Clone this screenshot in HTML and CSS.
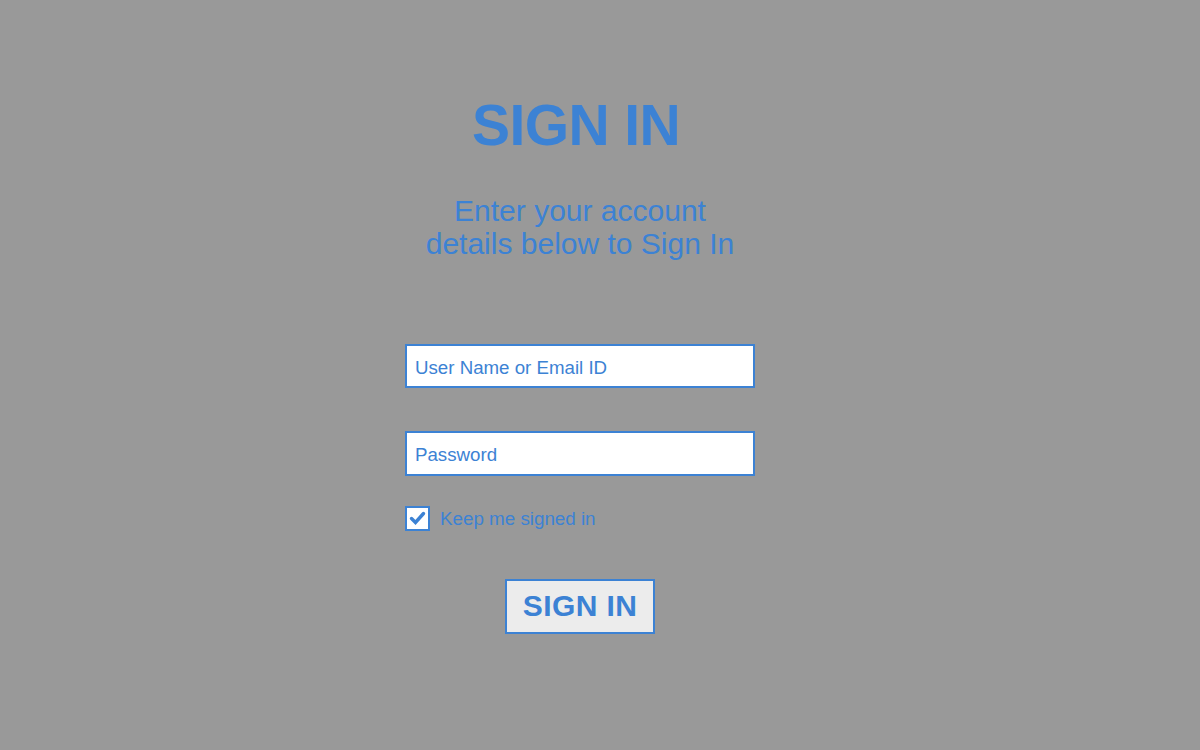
FILE: index.html
```html
<!DOCTYPE html>
<html lang="en">
<head>
<meta charset="utf-8">
<title>Sign In</title>
<link rel="stylesheet" href="styles.css">
</head>
<body>
<main class="page">
  <form class="signin">
    <h1 class="title">SIGN IN</h1>
    <p class="subtitle">Enter your account<br>details below to Sign In</p>
    <input class="field field-user" type="text" placeholder="User Name or Email ID">
    <input class="field field-pass" type="password" placeholder="Password">
    <label class="keep">
      <span class="check">
        <svg viewBox="0 0 21 21" width="21" height="21"><path d="M4.5 10.5 L8.5 14.5 L16.5 5.5" fill="none" stroke="#3c82d4" stroke-width="3.4" stroke-linecap="round" stroke-linejoin="miter"/></svg>
      </span>
      <span class="keep-text">Keep me signed in</span>
    </label>
    <button class="submit" type="button">SIGN IN</button>
  </form>
</main>
</body>
</html>
```
FILE: styles.css
```css
html, body {
  margin: 0;
  padding: 0;
  height: 100%;
}
body {
  background: #999999;
  font-family: "Liberation Sans", Arial, sans-serif;
  color: #3c82d4;
}
.page {
  display: flex;
  justify-content: center;
  padding-right: 40px;
  padding-top: 93px;
}
.signin {
  width: 350px;
  display: flex;
  flex-direction: column;
  align-items: center;
}
.title {
  margin: 0 0 0 -8px;
  font-size: 57px;
  font-weight: bold;
  line-height: 64px;
  letter-spacing: -0.6px;
}
.subtitle {
  margin: 37px 0 0 0;
  font-size: 30px;
  line-height: 33px;
  text-align: center;
}
.field {
  box-sizing: border-box;
  width: 350px;
  height: 44px;
  border: 2px solid #3c82d4;
  background: #ffffff;
  padding: 3px 8px 0 8px;
  font-family: "Liberation Sans", Arial, sans-serif;
  font-size: 18.7px;
  color: #3c82d4;
  outline: none;
}
.field::placeholder {
  color: #3c82d4;
  opacity: 1;
}
.field-user {
  margin-top: 84px;
}
.field-pass {
  margin-top: 43px;
  height: 45px;
  padding-top: 2px;
}
.keep {
  align-self: flex-start;
  display: flex;
  align-items: center;
  margin-top: 30px;
  gap: 10px;
}
.check {
  box-sizing: border-box;
  width: 25px;
  height: 25px;
  border: 2px solid #3c82d4;
  background: #ffffff;
  display: flex;
  align-items: center;
  justify-content: center;
}
.check svg {
  display: block;
}
.keep-text {
  font-size: 18.8px;
}
.submit {
  box-sizing: border-box;
  margin-top: 48px;
  width: 150px;
  height: 55px;
  border: 2px solid #3c82d4;
  background: #ececec;
  color: #3c82d4;
  font-family: "Liberation Sans", Arial, sans-serif;
  font-weight: bold;
  font-size: 30px;
  letter-spacing: 0.4px;
  padding: 0 0 2px 0;
}
```
